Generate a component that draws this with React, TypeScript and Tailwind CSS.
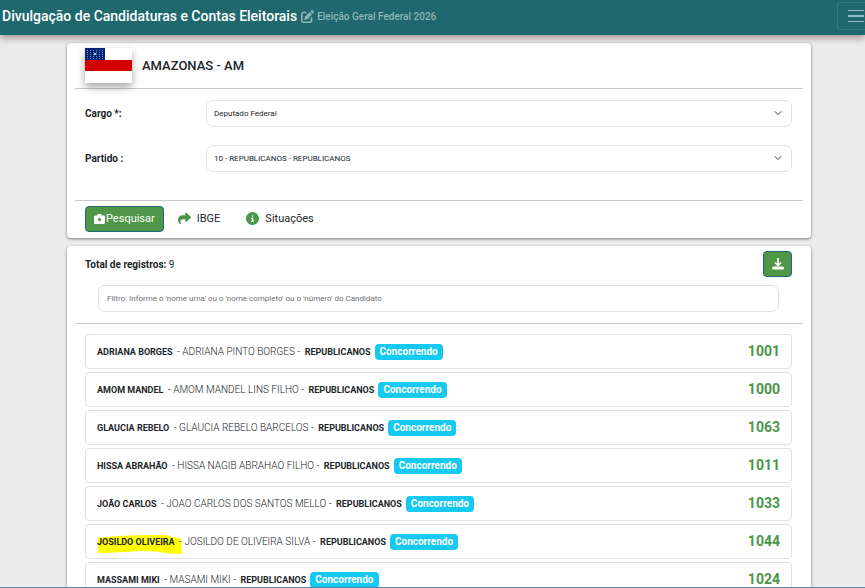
import { useState } from "react";
import { FaPenToSquare, FaShare, FaCircleInfo } from "react-icons/fa6";

interface ICandidate {
  name: string;
  fullName: string;
  number: string;
  marked?: boolean;
}

const PARTY = "REPUBLICANOS";

const candidates: ICandidate[] = [
  { name: "ADRIANA BORGES", fullName: "ADRIANA PINTO BORGES", number: "1001" },
  { name: "AMOM MANDEL", fullName: "AMOM MANDEL LINS FILHO", number: "1000" },
  { name: "GLAUCIA REBELO", fullName: "GLAUCIA REBELO BARCELOS", number: "1063" },
  { name: "HISSA ABRAHÃO", fullName: "HISSA NAGIB ABRAHAO FILHO", number: "1011" },
  { name: "JOÃO CARLOS", fullName: "JOAO CARLOS DOS SANTOS MELLO", number: "1033" },
  {
    name: "JOSILDO OLIVEIRA",
    fullName: "JOSILDO DE OLIVEIRA SILVA",
    number: "1044",
    marked: true,
  },
  { name: "MASSAMI MIKI", fullName: "MASAMI MIKI", number: "1024" },
];

const Flag = () => (
  <svg viewBox="0 0 47 35" className="w-[47px] h-[35px] shadow-[0_4px_8px_rgba(0,0,0,0.35)]">
    <rect width="47" height="35" fill="#fff" />
    <rect y="12" width="47" height="11" fill="#d40000" />
    <rect width="20" height="12" fill="#002776" />
    {[2, 5, 8, 11, 14, 17].map((x) =>
      [2, 4, 6, 8, 10].map((y) => (
        <rect key={`${x}-${y}`} x={x} y={y} width="1" height="0.8" fill="#8fa3d0" />
      ))
    )}
    <circle cx="10" cy="6" r="1" fill="#fff" />
  </svg>
);

const CameraIcon = () => (
  <svg viewBox="0 0 11 10" className="w-[11px] h-[10px]" fill="#fff">
    <path d="M3 1.500L3.800 0h3.400L8 1.500h1.700A1.300 1.300 0 0 1 11 2.800v5.900A1.300 1.300 0 0 1 9.700 10H1.300A1.300 1.300 0 0 1 0 8.700V2.800A1.300 1.300 0 0 1 1.300 1.500z" />
    <circle cx="5.500" cy="5.600" r="1.600" fill="#4f9648" />
  </svg>
);

const DownloadIcon = () => (
  <svg viewBox="0 0 12 12" className="w-3 h-3" fill="none" stroke="#fff">
    <path d="M6 0v7M3 4.5l3 3 3-3" strokeWidth="1.6" />
    <path d="M1.5 10h9" strokeWidth="3" strokeLinecap="round" />
  </svg>
);

const Chevron = () => (
  <svg
    viewBox="0 0 8 8"
    className="pointer-events-none absolute right-[10px] top-[9px] w-2 h-2"
    fill="none"
    stroke="#343a40"
    strokeLinecap="round"
    strokeLinejoin="round"
  >
    <path d="M1 2.5l3 3 3-3" />
  </svg>
);

interface ISelectField {
  id: string;
  label: string;
  option: string;
}

const SelectField = ({ id, label, option }: ISelectField) => (
  <div className="flex items-center">
    <label htmlFor={id} className="w-[121px] shrink-0 text-[10px] font-bold">
      {label}
    </label>
    <div className="relative flex-1">
      <select
        id={id}
        className="block w-full h-[27px] appearance-none rounded-[7px] border border-[#dee2e6] bg-white px-[7px] text-[8px]"
      >
        <option>{option}</option>
      </select>
      <Chevron />
    </div>
  </div>
);

const CandidateRow = ({ candidate }: { candidate: ICandidate }) => (
  <li className="flex h-[35px] items-center justify-between rounded border border-[#dee2e6] px-[11px]">
    <p className="isolate flex items-baseline whitespace-pre text-[10px] pt-px">
      <a href="#candidato" className="relative text-[9px] font-bold">
        {candidate.marked && (
          <svg
            viewBox="0 0 85 20"
            className="absolute left-px -top-px -z-10 w-[85px] h-5 max-w-none"
            fill="#ffff00"
          >
            <path d="M0 3L18 1L50 0H68L83 4L84 19C66 19 60 16 47 16S20 18 0 18Z" />
          </svg>
        )}
        {candidate.name}
      </a>
      <span className="px-[2px] font-light"> - {candidate.fullName} - </span>
      <b className="text-[9px]">{PARTY}</b>
      <span className="ml-1 h-4 rounded bg-[#15c9f0] px-[5px] leading-4 font-bold text-white">
        Concorrendo
      </span>
    </p>
    <span className="pb-px text-[14px] font-bold text-[#4b9549]">{candidate.number}</span>
  </li>
);

const App = () => {
  const [filter, setFilter] = useState("");

  return (
    <div className="h-screen overflow-hidden border-b border-[#5b82a0] bg-[#ececec] font-[Roboto,sans-serif] text-[#212529]">
      <header className="relative flex h-[35px] items-center bg-[#1f686d] pl-[2px] shadow-[0_2px_8px_rgba(60,20,20,0.5)]">
        <h1 className="text-[14px] font-medium text-white pb-[3px]">
          Divulgação de Candidaturas e Contas Eleitorais
        </h1>
        <p className="ml-1 flex items-center gap-[3px] text-[10px] font-medium text-[#8fb7b8] pb-[3px]">
          <FaPenToSquare className="size-[13px]" />
          Eleição Geral Federal 2026
        </p>
        <button
          aria-label="Menu"
          className="ml-auto flex h-7 w-7 items-center justify-end rounded-l border border-r-0 border-[#2f7d82] mb-[3px]"
        >
          <svg viewBox="0 0 16 14" className="w-4 h-[14px] mr-px" stroke="#8fc0c3" strokeWidth="1">
            <path d="M0 1.5h16M0 12.5h16" />
            <path d="M0 7h16" strokeWidth="2" />
          </svg>
        </button>
      </header>

      <main className="flex flex-col gap-2 pt-2 pr-[54px] pl-[67px]">
        <section className="rounded bg-white px-2 shadow-[0_1px_3px_rgba(0,0,0,0.5)]">
          <div className="flex items-start gap-[10px] border-b border-[#c8c9ca] px-[10px] pt-[5px] pb-[5px]">
            <Flag />
            <h2 className="pt-2 text-[13px] font-medium leading-5">AMAZONAS - AM</h2>
          </div>
          <div className="flex flex-col gap-[18px] pl-[10px] pr-[11px] pt-[11px] pb-[28px]">
            <SelectField id="cargo" label="Cargo *:" option="Deputado Federal" />
            <SelectField
              id="partido"
              label="Partido :"
              option="10 - REPUBLICANOS - REPUBLICANOS"
            />
          </div>
          <div className="flex items-center border-t border-[#c8c9ca] px-[10px] pt-[5px] pb-[6px] text-[11px]">
            <button className="flex h-[26px] items-center gap-px rounded border border-[#1f686d] bg-[#4f9648] px-2 text-white">
              <CameraIcon />
              Pesquisar
            </button>
            <a href="#ibge" className="ml-[14px] flex items-center gap-[6px]">
              <FaShare className="size-[13px] text-[#4b9549] mb-[2px]" />
              IBGE
            </a>
            <a href="#situacoes" className="ml-[26px] flex items-center gap-[6px]">
              <FaCircleInfo className="size-[13px] text-[#4b9549] mb-[2px]" />
              Situações
            </a>
          </div>
        </section>

        <section className="rounded bg-white px-2 shadow-[0_1px_3px_rgba(0,0,0,0.5)]">
          <div className="border-b border-[#c8c9ca] pl-[10px] pr-[11px] pt-[5px] pb-[11px]">
            <div className="flex items-center justify-between">
              <p className="text-[10px]">
                <b>Total de registros:</b> 9
              </p>
              <button
                aria-label="Baixar"
                className="flex h-[26px] w-[29px] items-center justify-center rounded border border-[#1f686d] bg-[#4f9648]"
              >
                <DownloadIcon />
              </button>
            </div>
            <div className="px-[13px] pt-2">
              <input
                type="text"
                aria-label="Filtro"
                value={filter}
                onChange={(e) => setFilter(e.target.value)}
                placeholder="Filtro: Informe o 'nome urna' ou o 'nome completo' ou o 'número' do Candidato"
                className="block h-[27px] w-full rounded-[7px] border border-[#dee2e6] px-2 text-[8px] placeholder:text-[#6c6f73]"
              />
            </div>
          </div>
          <ul className="flex flex-col gap-[3px] pl-[10px] pr-[11px] py-[10px]">
            {candidates.map((candidate) => (
              <CandidateRow key={candidate.number} candidate={candidate} />
            ))}
          </ul>
        </section>
      </main>
    </div>
  );
};

export default App;
